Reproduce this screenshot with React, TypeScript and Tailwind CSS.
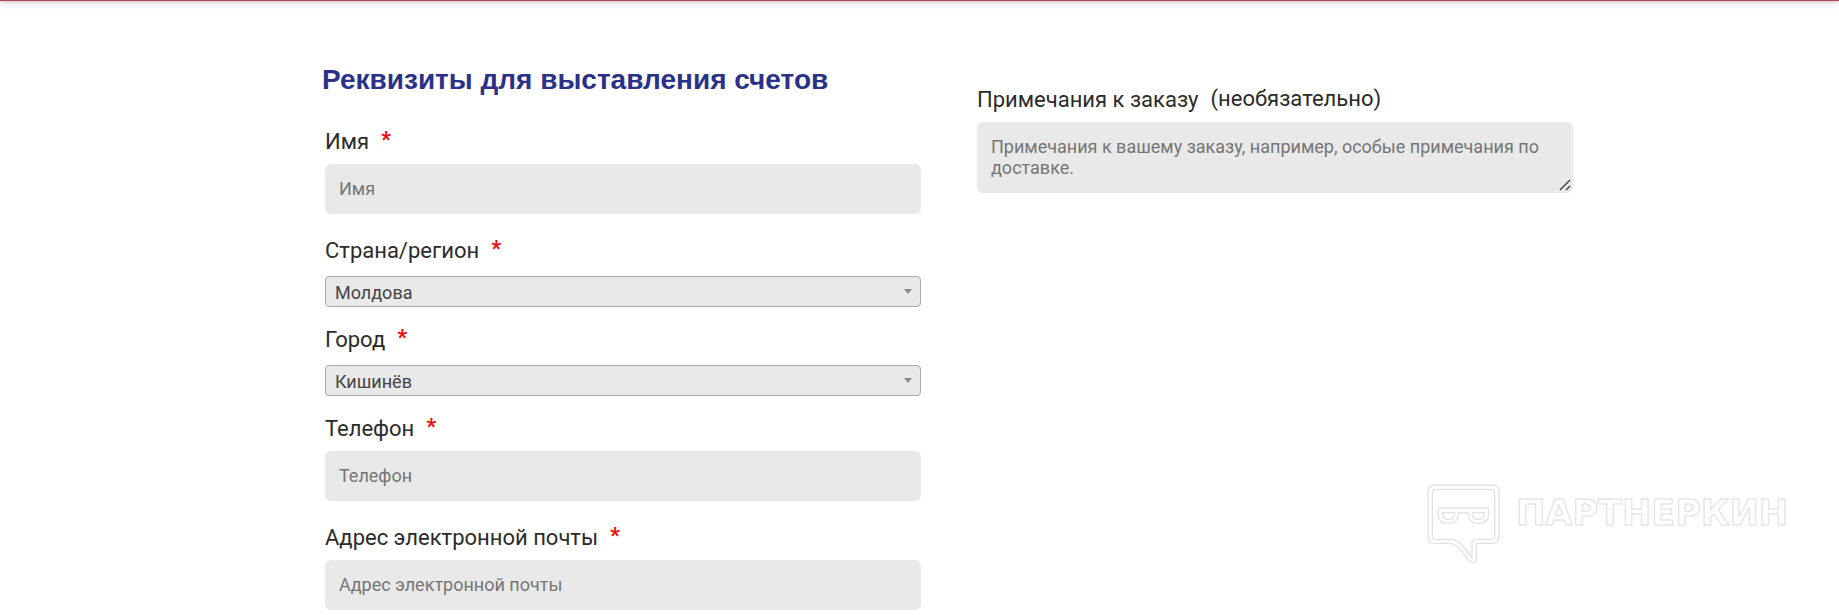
import type { ReactNode } from 'react';

interface FieldProps {
  id: string;
  label: string;
}

function FieldLabel({ id, children }: { id: string; children: ReactNode }) {
  return (
    <label htmlFor={id} className="flex items-start gap-3 text-[22px] leading-[31px] text-[#2b2b2b]">
      {children}
    </label>
  );
}

function RequiredMark() {
  return (
    <abbr title="обязательно" className="leading-7 font-bold text-[#f00c0c] no-underline">
      *
    </abbr>
  );
}

function TextField({ id, label, type = 'text' }: FieldProps & { type?: string }) {
  return (
    <div className="mb-[21px]">
      <FieldLabel id={id}>
        {label}
        <RequiredMark />
      </FieldLabel>
      <input
        id={id}
        type={type}
        placeholder={label}
        className="mt-[7px] block h-[50px] w-full rounded-md bg-[#e9e9e9] px-[14px] pb-[2px] text-lg text-[#444] placeholder:text-[#757575] focus:outline-none"
      />
    </div>
  );
}

function SelectField({ id, label, options }: FieldProps & { options: string[] }) {
  return (
    <div className="mb-[17px]">
      <FieldLabel id={id}>
        {label}
        <RequiredMark />
      </FieldLabel>
      <div className="relative mt-[10px]">
        <select
          id={id}
          className="block h-[31px] w-full appearance-none rounded border border-[#aaa] bg-[#e9e9e9] px-[9px] pt-[2px] text-lg leading-7 text-[#444]"
        >
          {options.map((option) => (
            <option key={option}>{option}</option>
          ))}
        </select>
        <svg
          viewBox="0 0 8 5"
          className="pointer-events-none absolute top-[13px] right-[9px] h-[5px] w-2 fill-[#888]"
          aria-hidden="true"
        >
          <path d="M0 0h8L4 5z" />
        </svg>
      </div>
    </div>
  );
}

function Watermark() {
  return (
    <div className="pointer-events-none absolute top-[484px] right-[51px] flex items-start gap-4">
      <svg viewBox="70 70 219 240" className="h-20 w-[73px]" fill="none" stroke="#e2e2e2" strokeWidth="4">
        <path d="M94 73H265Q286 73 286 94V227Q286 248 265 248H218V294Q218 305 208 305Q200 305 194 298L172 270Q156 250 140 248H94Q73 248 73 227V94Q73 73 94 73Z" />
        <path d="M96 86H263Q273 86 273 96V226Q273 236 263 236H217Q205 236 205 248V292L184 264Q164 237 144 236H96Q86 236 86 226V96Q86 86 96 86Z" />
        <path d="M111 142H247Q255 142 255 150V160Q255 188 227 188H220Q194 188 193 157H165Q164 188 138 188H131Q103 188 103 160V150Q103 142 111 142Z" />
        <path d="M116 156H152V160Q152 176 136 176Q116 176 116 160Z" />
        <path d="M206 156H242V160Q242 176 222 176Q206 176 206 160Z" />
      </svg>
      <span className="pt-[9px] font-['DejaVu_Sans',sans-serif] text-[35px] leading-10 font-bold text-white [-webkit-text-stroke:1px_#dedede]">
        ПАРТНЕРКИН
      </span>
    </div>
  );
}

export default function App() {
  return (
    <div className="relative flex flex-col bg-white font-[Roboto,sans-serif]">
      <header className="-mt-5 h-[21px] bg-[#a0505a] shadow-[0_0_2px_rgba(225,60,90,0.4),0_1px_8px_rgba(0,0,0,0.2)]" />
      <main className="pr-[266px] pl-[325px]">
        <form className="grid grid-cols-2 gap-14">
          <section className="pt-[61px]">
            <h3 className="-ml-[3px] mb-7 font-['Liberation_Sans',Arial,sans-serif] text-[28px] leading-9 font-bold text-[#2a3189]">
              Реквизиты для выставления счетов
            </h3>
            <TextField id="first-name" label="Имя" />
            <SelectField id="country" label="Страна/регион" options={['Молдова']} />
            <SelectField id="city" label="Город" options={['Кишинёв']} />
            <TextField id="phone" label="Телефон" type="tel" />
            <TextField id="email" label="Адрес электронной почты" type="email" />
          </section>
          <section className="pt-[83px]">
            <FieldLabel id="comments">
              Примечания к заказу
              <span className="leading-[29px]">(необязательно)</span>
            </FieldLabel>
            <div className="relative mt-[7px]">
              <textarea
                id="comments"
                placeholder="Примечания к вашему заказу, например, особые примечания по доставке."
                className="block h-[71px] w-full rounded-md bg-[#e9e9e9] px-[14px] py-[14px] text-lg leading-[21px] text-[#444] placeholder:text-[#757575] focus:outline-none [&::-webkit-resizer]:hidden"
              />
              <svg
                viewBox="0 0 12 12"
                className="pointer-events-none absolute right-[2px] bottom-[2px] size-3"
                fill="none"
                stroke="#444"
                strokeWidth="1.5"
                aria-hidden="true"
              >
                <path d="M1 11L11 1M7 11L11 7" />
              </svg>
            </div>
          </section>
        </form>
      </main>
      <Watermark />
    </div>
  );
}
